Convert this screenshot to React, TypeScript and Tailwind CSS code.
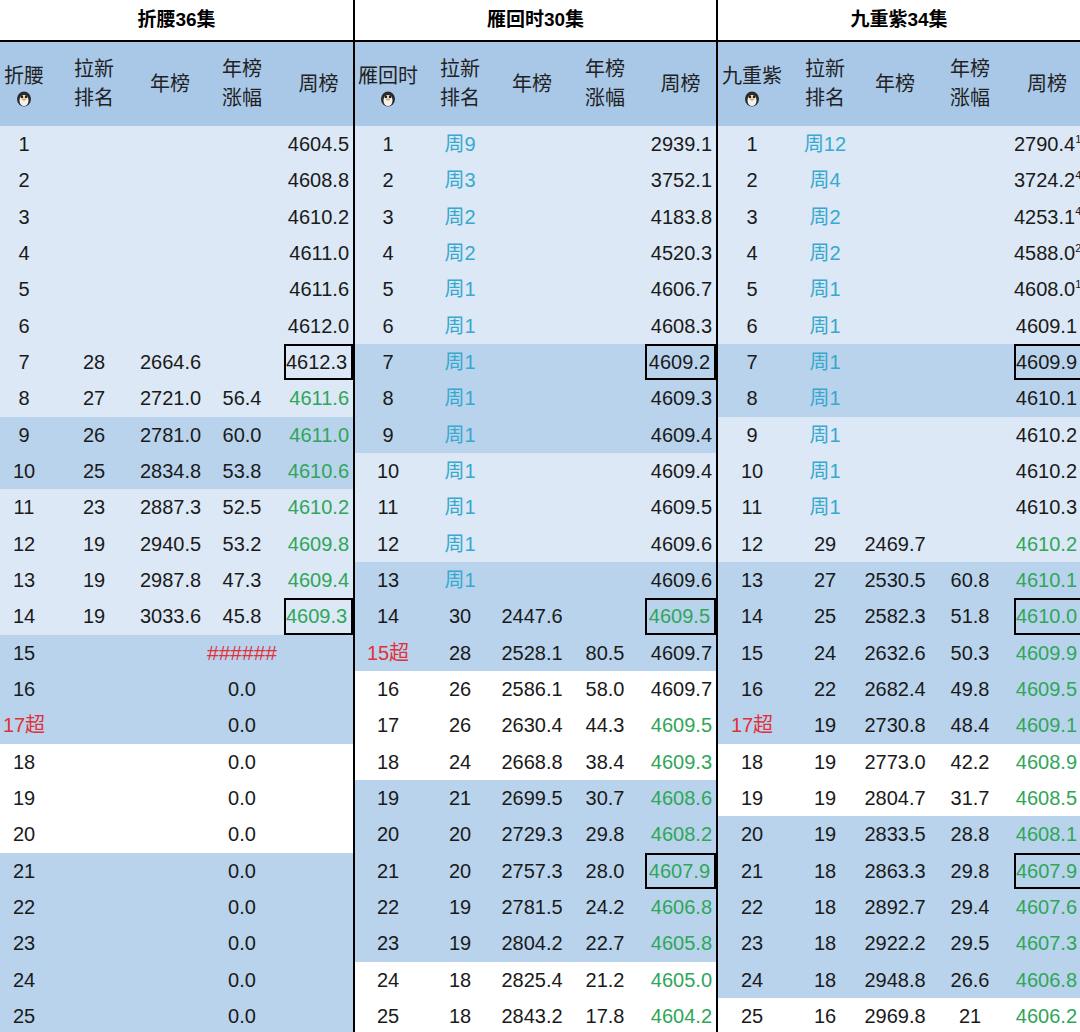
import React from "react";

type Cell = string;
type Row = { c: Cell[]; bg: "l" | "d" | "w"; green?: boolean; box?: boolean; red?: boolean; sup?: string; hashRed?: boolean };

const FONT = { fontFamily: '"Liberation Sans", Arial, "Noto Sans CJK SC", sans-serif' };

function bgFor(b: string) {
  return b === "l" ? "bg-[#dce8f5]" : b === "d" ? "bg-[#b9d3ec]" : "bg-white";
}

const p1bg = (i: number) => (i <= 8 ? "l" : i <= 10 ? "d" : i <= 14 ? "l" : i <= 17 ? "d" : i <= 20 ? "w" : "d");
const p2bg = (i: number) => (i <= 6 ? "l" : i <= 9 ? "d" : i <= 12 ? "l" : i <= 15 ? "d" : i <= 18 ? "w" : i <= 23 ? "d" : "w");
const p3bg = (i: number) => (i <= 6 ? "l" : i <= 8 ? "d" : i <= 12 ? "l" : i <= 17 ? "d" : i <= 19 ? "w" : i <= 24 ? "d" : "w");

const p1raw: string[][] = [
  ["1", "", "", "", "4604.5"], ["2", "", "", "", "4608.8"], ["3", "", "", "", "4610.2"], ["4", "", "", "", "4611.0"],
  ["5", "", "", "", "4611.6"], ["6", "", "", "", "4612.0"], ["7", "28", "2664.6", "", "4612.3"],
  ["8", "27", "2721.0", "56.4", "4611.6"], ["9", "26", "2781.0", "60.0", "4611.0"], ["10", "25", "2834.8", "53.8", "4610.6"],
  ["11", "23", "2887.3", "52.5", "4610.2"], ["12", "19", "2940.5", "53.2", "4609.8"], ["13", "19", "2987.8", "47.3", "4609.4"],
  ["14", "19", "3033.6", "45.8", "4609.3"], ["15", "", "", "######", ""], ["16", "", "", "0.0", ""], ["17超", "", "", "0.0", ""],
  ["18", "", "", "0.0", ""], ["19", "", "", "0.0", ""], ["20", "", "", "0.0", ""], ["21", "", "", "0.0", ""],
  ["22", "", "", "0.0", ""], ["23", "", "", "0.0", ""], ["24", "", "", "0.0", ""], ["25", "", "", "0.0", ""],
];
const p1: Row[] = p1raw.map((r, k) => {
  const i = k + 1;
  return { c: r, bg: p1bg(i), green: i >= 8 && i <= 14, box: i === 7 || i === 14, red: i === 17, hashRed: i === 15 };
});

const p2raw = [
  ["1", "周9", "", "", "2939.1"], ["2", "周3", "", "", "3752.1"], ["3", "周2", "", "", "4183.8"], ["4", "周2", "", "", "4520.3"],
  ["5", "周1", "", "", "4606.7"], ["6", "周1", "", "", "4608.3"], ["7", "周1", "", "", "4609.2"], ["8", "周1", "", "", "4609.3"],
  ["9", "周1", "", "", "4609.4"], ["10", "周1", "", "", "4609.4"], ["11", "周1", "", "", "4609.5"], ["12", "周1", "", "", "4609.6"],
  ["13", "周1", "", "", "4609.6"], ["14", "30", "2447.6", "", "4609.5"], ["15超", "28", "2528.1", "80.5", "4609.7"],
  ["16", "26", "2586.1", "58.0", "4609.7"], ["17", "26", "2630.4", "44.3", "4609.5"], ["18", "24", "2668.8", "38.4", "4609.3"],
  ["19", "21", "2699.5", "30.7", "4608.6"], ["20", "20", "2729.3", "29.8", "4608.2"], ["21", "20", "2757.3", "28.0", "4607.9"],
  ["22", "19", "2781.5", "24.2", "4606.8"], ["23", "19", "2804.2", "22.7", "4605.8"], ["24", "18", "2825.4", "21.2", "4605.0"],
  ["25", "18", "2843.2", "17.8", "4604.2"],
];
const p2: Row[] = p2raw.map((r, k) => {
  const i = k + 1;
  return { c: r, bg: p2bg(i), green: i === 14 || i >= 17, box: i === 7 || i === 14 || i === 21, red: i === 15 };
});

const sups: Record<number, string> = { 1: "12", 2: "4", 3: "4", 4: "2", 5: "1" };
const p3raw = [
  ["1", "周12", "", "", "2790.4"], ["2", "周4", "", "", "3724.2"], ["3", "周2", "", "", "4253.1"], ["4", "周2", "", "", "4588.0"],
  ["5", "周1", "", "", "4608.0"], ["6", "周1", "", "", "4609.1"], ["7", "周1", "", "", "4609.9"], ["8", "周1", "", "", "4610.1"],
  ["9", "周1", "", "", "4610.2"], ["10", "周1", "", "", "4610.2"], ["11", "周1", "", "", "4610.3"], ["12", "29", "2469.7", "", "4610.2"],
  ["13", "27", "2530.5", "60.8", "4610.1"], ["14", "25", "2582.3", "51.8", "4610.0"], ["15", "24", "2632.6", "50.3", "4609.9"],
  ["16", "22", "2682.4", "49.8", "4609.5"], ["17超", "19", "2730.8", "48.4", "4609.1"], ["18", "19", "2773.0", "42.2", "4608.9"],
  ["19", "19", "2804.7", "31.7", "4608.5"], ["20", "19", "2833.5", "28.8", "4608.1"], ["21", "18", "2863.3", "29.8", "4607.9"],
  ["22", "18", "2892.7", "29.4", "4607.6"], ["23", "18", "2922.2", "29.5", "4607.3"], ["24", "18", "2948.8", "26.6", "4606.8"],
  ["25", "16", "2969.8", "21", "4606.2"],
];
const p3: Row[] = p3raw.map((r, k) => {
  const i = k + 1;
  return { c: r, bg: p3bg(i), green: i >= 12, box: i === 7 || i === 14 || i === 21, red: i === 17, sup: sups[i] };
});

function Penguin() {
  return (
    <svg width="18" height="16" viewBox="0 0 18 16">
      <ellipse cx="9" cy="8" rx="7" ry="7.5" fill="#2a2a2a" />
      <ellipse cx="9" cy="9.5" rx="4.5" ry="5.5" fill="#f2f2f2" />
      <circle cx="7" cy="6" r="1.3" fill="#222" />
      <circle cx="11" cy="6" r="1.3" fill="#222" />
      <ellipse cx="9" cy="8.5" rx="2.2" ry="1.1" fill="#f0a020" />
    </svg>
  );
}

function Panel({ title, name, rows, cols, right, border }: { title: string; name: string; rows: Row[]; cols: string; right: string; border: boolean }) {
  return (
    <div className={`flex flex-col ${border ? "border-r-2 border-black" : ""}`}>
      <div className="h-[42px] flex items-center justify-center bg-white font-bold text-[19px] text-black border-b-2 border-black">{title}</div>
      <div className={`grid ${cols} h-[84px] bg-[#a9c8e8] text-[20px] leading-[29px] text-[#222] items-center text-center`}>
        <div className="flex flex-col items-center"><span>{name}</span><Penguin /></div>
        <div>拉新<br />排名</div>
        <div>年榜</div>
        <div>年榜<br />涨幅</div>
        <div>周榜</div>
      </div>
      {rows.map((r, i) => (
        <div key={i} className={`grid ${cols} h-[36.33px] ${bgFor(r.bg)} text-[20px] items-center text-center text-[#1a1a1a]`}>
          <div className={r.red ? "text-[#e0303a]" : ""}>{r.c[0]}</div>
          <div className={r.c[1].startsWith("周") ? "text-[#37a9cf]" : ""}>{r.c[1]}</div>
          <div>{r.c[2]}</div>
          <div className={r.hashRed ? "text-[#e0303a] text-[21px] whitespace-nowrap" : ""}>{r.c[3]}</div>
          <div className={`h-full flex items-center justify-end ${right} ${r.box ? "border-2 border-black" : ""} ${r.green ? "text-[#2fa65a]" : ""} whitespace-nowrap`}>
            {r.c[4]}
            {r.sup && <sup className="text-[11px]">{r.sup}</sup>}
          </div>
        </div>
      ))}
    </div>
  );
}

export default function App() {
  return (
    <div style={FONT} className="w-[1080px] h-[1032px] overflow-hidden bg-white grid grid-cols-[355px_363px_362px]">
      <Panel title="折腰36集" name="折腰" rows={p1} cols="grid-cols-[48px_92px_60px_84px_1fr]" right="pr-[4px]" border />
      <Panel title="雁回时30集" name="雁回时" rows={p2} cols="grid-cols-[66px_78px_66px_80px_1fr]" right="pr-[4px]" border />
      <Panel title="九重紫34集" name="九重紫" rows={p3} cols="grid-cols-[68px_78px_62px_88px_1fr]" right="pr-[3px]" border={false} />
    </div>
  );
}
